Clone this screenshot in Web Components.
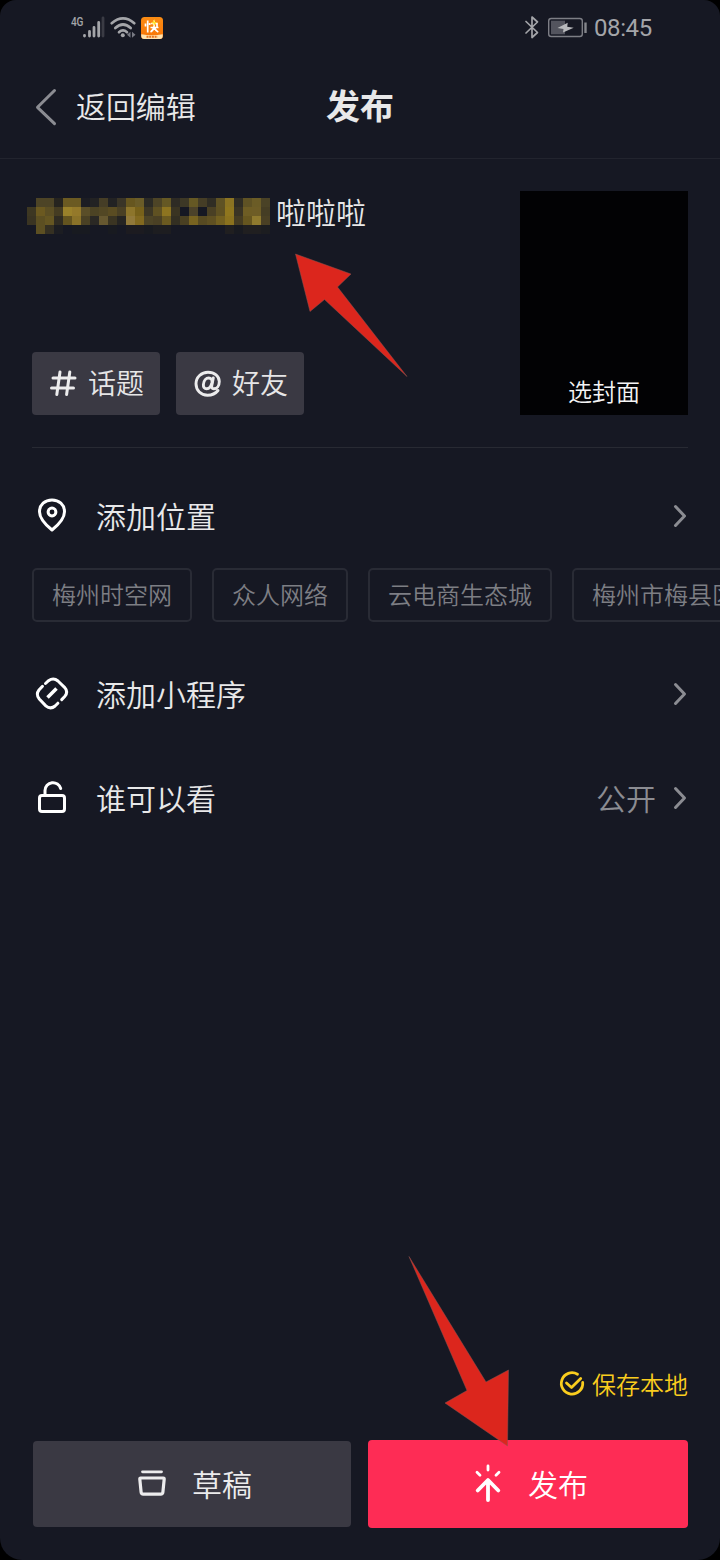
<!DOCTYPE html>
<html lang="zh-CN">
<head>
<meta charset="utf-8">
<title>发布</title>
<style>
html,body{margin:0;padding:0;background:#000;}
body{width:720px;height:1560px;overflow:hidden;font-family:"Roboto","Noto Sans CJK SC",sans-serif;--thin:350;--cjk:"Roboto","Noto Sans CJK SC DemiLight","Noto Sans CJK SC",sans-serif;}
</style>
</head>
<body>
<publish-screen></publish-screen>
<script>
const define = (name, html, setup) => customElements.define(name, class extends HTMLElement {
  constructor() {
    super();
    const t = document.createElement('template');
    t.innerHTML = html;
    this.attachShadow({mode: 'open'}).append(t.content.cloneNode(true));
  }
  connectedCallback() { if (setup) setup(this, this.shadowRoot); }
});

define('status-bar', `
<style>
:host{display:flex;height:56px;box-sizing:border-box;padding:0 68px 0 71px;justify-content:space-between;color:#a4a5a9}
div{display:flex;align-items:center}
svg{display:block}
.net{font:500 12px/12px "Roboto",sans-serif;width:12px;align-self:flex-start;margin-top:16px;letter-spacing:-.3px;transform:scaleX(.84);transform-origin:0 0;white-space:nowrap}
.time{font:400 24px/56px "Roboto",sans-serif;margin-left:6px;width:58px;letter-spacing:-.4px;white-space:nowrap}
</style>
<div>
  <span class="net">4G</span>
  <svg width="22" height="56" viewBox="83 0 22 56" stroke-width="2.800" stroke-linecap="round">
    <path d="M84.500 35.300v.8M89.500 31.500v4.600M94 27.500v8.600M98.700 22.500v13.600" stroke="#a4a5a9"/><path d="M103 18v18" stroke="#3a3b44"/>
  </svg>
  <svg width="36" height="56" viewBox="105 0 36 56" fill="none" stroke="#a4a5a9" stroke-width="2.700" stroke-linecap="round">
    <path d="M111.700 23.200Q123 13.500 134.300 23.200M115.300 28Q123 21 130.700 28M119 32.200Q123 28.500 127 32.200"/>
    <circle cx="122.800" cy="35.200" r="2" fill="#a4a5a9" stroke="none"/>
    <path d="M130.500 31.800v6l-3.500-3zM132 31.800v6l3.500-3z" fill="#777982" stroke="none"/>
  </svg>
  <svg width="22" height="22" viewBox="0 0 22 22">
    <defs><linearGradient id="g" x2="0" y2="1"><stop stop-color="#fb8c14"/><stop offset="1" stop-color="#f87405"/></linearGradient></defs>
    <rect width="22" height="22" rx="3.500" fill="url(#g)"/>
    <path d="M.3 17.300Q11 19 21.700 17.300V19a3 3 0 0 1-3 3H3.300a3 3 0 0 1-3-3z" fill="#ffe3b0"/>
    <path d="M6.700 3.500v12M4.500 6.500v3M8.700 6v2M10 6.500h6v4M9.500 10.500h8M13 3.500v6q-.6 4-3.500 5.500M13.500 11q1.500 3 3.800 4" fill="none" stroke="#fff" stroke-width="1.700"/>
    <path d="M13.500 2l-3 4.500h2.500l-1 3 4-4.500h-2.500z" fill="#ffe12b"/>
    <path d="M5.500 19.800h11" stroke="#e8731b" stroke-width="2" stroke-dasharray="2 .7"/>
  </svg>
</div>
<div>
  <svg width="18" height="56" viewBox="523 0 18 56" fill="none" stroke="#a4a5a9" stroke-width="1.700" stroke-linejoin="round" stroke-linecap="round"><path d="M526 21.500l11.500 11-5.500 5V17l5.500 5-11.500 11"/></svg>
  <svg width="47" height="56" viewBox="541 0 47 56">
    <rect x="548.700" y="18.500" width="33.600" height="18" rx="2.500" fill="none" stroke="#7d7e85" stroke-width="1.400"/>
    <path d="M551 20.700h14v13.600h-14z" fill="#53545e"/>
    <path d="M557.500 28l10.200-5.300-.5 4 6.500 1-10.700 4.800.5-3.500z" fill="#b8b9bc"/>
    <path d="M585.500 22.500v10.500" stroke="#85868c" stroke-width="2.400"/>
  </svg>
  <span class="time">08:45</span>
</div>`);

define('nav-header', `
<style>
:host{display:grid;grid-template-columns:1fr auto 1fr;align-items:center;height:103px;box-sizing:border-box;padding:0 32px;border-bottom:1px solid #22242e;color:#e8e8e9}
.back{display:flex;align-items:center;font-family:var(--cjk);font-size:30px;line-height:44px;font-weight:var(--thin)}
.back span{margin-left:14px;padding-top:2px;letter-spacing:-.1px}
h1{margin:0;font-size:34px;line-height:50px;font-weight:700}
svg{display:block}
</style>
<div class="back"><svg width="30" height="44" viewBox="32 84 30 44" fill="none" stroke="#8b8c92" stroke-width="3" stroke-linecap="round" stroke-linejoin="round"><path d="M54.500 89.500L37.500 106.300l17 16.400"/></svg><span><slot name="back"></slot></span></div>
<h1><slot></slot></h1>`);

define('pixel-mask', `
<style>:host{display:block;width:243px;height:36px}svg{display:block}</style>
<svg width="243" height="36" viewBox="0 0 27 4" shape-rendering="crispEdges"></svg>`, (el, root) => {
  const rows = [
    '- 4d4426 4d4426 26241f 6b5a22 6b5a22 1c1d23 222223 453d26 222223 3a3527 66561f 6a5c28 2c2b25 4d4426 655824 2e2b24 3d3826 655824 453d26 302d24 5f5224 8b7322 302d24 5f5224 6b5c26 4a4226',
    '3d3722 6b5920 5c4f24 453c22 9a812a 94792a 5a4e28 4c4324 524724 5a4c22 4a4024 8d752b 77611a 3d3725 5f5122 8d7420 3a3422 - 4c422a - 4a4024 5f5122 8f761e 3a3424 6e5d24 6e5d26 453d24',
    '3a3422 5c4f22 655622 302c22 64541f 8a7228 4a4124 2a2824 665830 3a3422 252422 91793a 82691f 4d4426 4a4024 6b5a20 332f22 4a4022 786320 574a22 5f5022 736020 8b721e 453c22 66561f 8f7a2e 4a4024',
    '- 5c4f22 353022 1c1d22 - 181a20 181a20 - - 181a20 - 1c1b20 1c1b20 181a20 1d1d20 1d1d20 - - - - - - 201f20 181a20 201f20 201f20 1c1d20'
  ];
  root.querySelector('svg').innerHTML = rows.map((r, y) => r.split(' ').map((c, x) => c === '-' ? '' : `<rect x="${x}" y="${y}" width="1" height="1" fill="#${c}"/>`).join('')).join('');
});

define('tag-button', `
<style>
:host{display:flex;align-items:center;justify-content:center;gap:10px;width:128px;height:63px;border-radius:4px;background:#3a3943;color:#e6e6e7;font-family:var(--cjk);font-size:28px;line-height:40px;font-weight:var(--thin)}
::slotted(svg){display:block;flex:none}
span{padding-top:3px}
</style><slot name="icon"></slot><span><slot></slot></span>`);

define('compose-box', `
<style>
:host{display:flex;justify-content:space-between;height:289px;box-sizing:border-box;margin:0 32px;padding:32px 0;border-bottom:1px solid #282a33;font-family:var(--cjk)}
.left{display:flex;flex-direction:column;justify-content:space-between}
.caption{display:flex;align-items:flex-start;gap:6px;margin-left:-5px;font-size:30px;line-height:44px;color:#e8e8e9;font-weight:var(--thin)}
.caption span{padding-top:1px}
pixel-mask{margin-top:7px}
.tags{display:flex;gap:16px}
.cover{width:168px;height:224px;background:#020204;display:flex;align-items:flex-end;justify-content:center;color:#f4f4f5;font-size:24px;line-height:36px;font-weight:var(--thin);box-sizing:border-box;padding-bottom:4px}
</style>
<div class="left">
  <div class="caption"><pixel-mask></pixel-mask><span>啦啦啦</span></div>
  <div class="tags">
    <tag-button><svg slot="icon" width="30" height="30" viewBox="0 0 30 30" fill="none" stroke="#ececed" stroke-width="3" stroke-linecap="round"><path d="M5 9h22M3.500 19h22M12 3L8.800 25.500M21.800 3L18.600 25.500"/></svg>话题</tag-button>
    <tag-button><svg slot="icon" width="30" height="30" viewBox="0 0 30 30" fill="none" stroke="#ececed" stroke-linecap="round"><path d="M26 21.500C23 25.300 19.500 26.200 15.500 26.200 9 26.200 4 21.500 4 14.800 4 8.100 9.500 3.200 16 3.200c6.500 0 11.300 4 11.300 9.300 0 4.500-2.500 7.300-5.500 7.300-2 0-2.400-1.300-2-3.300L21.300 9" stroke-width="2.900"/><path d="M20 13.500c-.8 4-3 6.300-5.300 6.300-2.300 0-3.500-1.700-3.300-4.300.3-4 2.800-6.500 5.300-6.500 2.300 0 3.700 1.700 3.300 4.500z" stroke-width="2.900"/></svg>好友</tag-button>
  </div>
</div>
<div class="cover">选封面</div>`);

define('setting-row', `
<style>
:host{display:flex;align-items:center;height:104px;padding:0 32px;color:#e8e8e9;font-family:var(--cjk);font-size:30px;line-height:44px;font-weight:var(--thin)}
::slotted(svg){display:block;flex:none}
.label{flex:1;margin-left:24px;padding-top:3px}
.value{color:#8b8c92;margin-right:12px;padding-top:3px}
svg{display:block}
</style>
<slot name="icon"></slot><span class="label"><slot></slot></span><span class="value"><slot name="value"></slot></span>
<svg width="20" height="30" viewBox="0 0 20 30" fill="none" stroke="#8b8c92" stroke-width="3" stroke-linecap="round" stroke-linejoin="round"><path d="M7.500 5.500l9 9.500-9 9.500"/></svg>`);

define('place-chip', `
<style>:host{display:block;flex:none;box-sizing:border-box;height:54px;padding:1px 18px 0;border:2px solid #292b35;border-radius:5px;color:#7d7e84;font-family:var(--cjk);font-size:24px;line-height:50px;font-weight:var(--thin);white-space:nowrap}</style><slot></slot>`);

define('chip-strip', `
<style>:host{display:flex;gap:20px;padding-left:32px;margin-bottom:20px;overflow:hidden}</style><slot></slot>`);

define('save-local', `
<style>:host{display:flex;justify-content:flex-end;align-items:center;gap:6px;height:36px;color:#facd1e;font-family:var(--cjk);font-size:24px;line-height:36px;font-weight:var(--thin)}svg{display:block}span{padding-top:3px}</style>
<svg width="28" height="28" viewBox="0 0 28 28" fill="none" stroke="#facd1e" stroke-width="2.800" stroke-linecap="round" stroke-linejoin="round"><path d="M19.500 4.200A10.700 10.700 0 1 0 24.700 12.500M8.500 13l5 4.500 9.200-9"/></svg><span><slot></slot></span>`);

define('action-button', `
<style>
:host{display:flex;align-items:center;justify-content:center;gap:20px;box-sizing:border-box;width:318px;height:86px;border-radius:4px;background:#3a3943;color:#ececed;font-family:var(--cjk);font-size:30px;line-height:44px;font-weight:var(--thin)}
:host([primary]){width:320px;height:88px;background:#fe2c55;color:#fff}
::slotted(svg){display:block;flex:none}
.t{padding-top:3px}
</style><slot name="icon"></slot><span class="t"><slot></slot></span>`);

define('red-pointer', `
<style>:host{position:absolute;display:block;pointer-events:none}svg{display:block}</style><svg></svg>`, (el, root) => {
  const [x, y, w, h] = el.getAttribute('box').split(' ');
  el.style.cssText = `left:${x}px;top:${y}px`;
  const s = root.querySelector('svg');
  s.setAttribute('width', w); s.setAttribute('height', h);
  s.setAttribute('viewBox', `${x} ${y} ${w} ${h}`);
  s.innerHTML = `<polygon points="${el.getAttribute('points')}" fill="#dc261d" stroke="#8e5550" stroke-width=".5"/>`;
});

define('publish-screen', `
<style>
:host{position:relative;display:flex;flex-direction:column;width:720px;height:1560px;background:#161823;border-radius:16px 16px 22px 22px;overflow:hidden}
main{padding-top:16px}
footer{margin-top:auto;padding:0 32px 32px}
.actions{display:flex;align-items:center;justify-content:space-between;margin-top:38px;padding-left:1px}
</style>
<status-bar></status-bar>
<nav-header><span slot="back">返回编辑</span>发布</nav-header>
<compose-box></compose-box>
<main>
<setting-row><svg slot="icon" width="40" height="40" viewBox="0 0 40 40" fill="none" stroke="#fff" stroke-width="3"><path d="M20 34C14.500 29.500 7.500 23 7.500 15.700 7.500 8.700 13 4 20 4s12.500 4.700 12.500 11.700C32.500 23 25.500 29.500 20 34z" stroke-linejoin="round"/><circle cx="20" cy="16" r="3.900"/></svg>添加位置</setting-row>
<chip-strip><place-chip>梅州时空网</place-chip><place-chip>众人网络</place-chip><place-chip>云电商生态城</place-chip><place-chip>梅州市梅县区</place-chip></chip-strip>
<setting-row><svg slot="icon" width="40" height="40" viewBox="0 0 40 40" fill="none" stroke="#fff" stroke-width="3" stroke-linecap="round"><path d="M13.500 9.500l3-2.800q5-3.500 9.500.3l6.500 6.300q4.200 4.700.2 9.300l-3 3M10.500 12.300L7 16q-3.500 4.500.3 9l6.500 6.800q4.700 4 9.300.2l2.800-2.800"/><path d="M15.500 23.500l9-9" stroke-width="3.600" stroke-linecap="butt"/></svg>添加小程序</setting-row>
<setting-row><svg slot="icon" width="40" height="40" viewBox="0 0 40 40" fill="none" stroke="#fff" stroke-width="3" stroke-linecap="round"><rect x="7.500" y="17.500" width="25" height="16" rx="2.500"/><path d="M13 17v-4.500A8 8 0 0 1 28.700 10.500"/></svg>谁可以看<span slot="value">公开</span></setting-row>
</main>
<footer>
  <save-local>保存本地</save-local>
  <div class="actions">
    <action-button><svg slot="icon" width="40" height="40" viewBox="0 0 40 40" fill="none" stroke="#ececed" stroke-linecap="round" stroke-linejoin="round"><path d="M10.500 7.800h19" stroke-width="2.800"/><path d="M8.700 14h22.600q1 0 .9 1.200l-1.300 13q-.2 2-2.200 2H11.300q-2 0-2.200-2l-1.300-13q-.1-1.200.9-1.200z" stroke-width="3.200"/></svg>草稿</action-button>
    <action-button primary><svg slot="icon" width="40" height="40" viewBox="0 0 40 40" fill="none" stroke="#fff" stroke-linecap="round" stroke-linejoin="round"><path d="M20 36V16.500M9.700 26.500L20 16l10.300 10.500" stroke-width="3.800"/><path d="M20 2v4M9 8.200l3 3M31 8.200l-3 3" stroke-width="2.800"/></svg>发布</action-button>
  </div>
</footer>
<red-pointer box="290 250 125 130" points="295.500,254 351,274 337.500,287 407,376.500 324.500,299.500 310,311.500"></red-pointer>
<red-pointer box="400 1250 120 200" points="409,1256.500 486,1382 508.500,1370 507.500,1446 445,1403 467,1390.500"></red-pointer>`);
</script>
</body>
</html>
